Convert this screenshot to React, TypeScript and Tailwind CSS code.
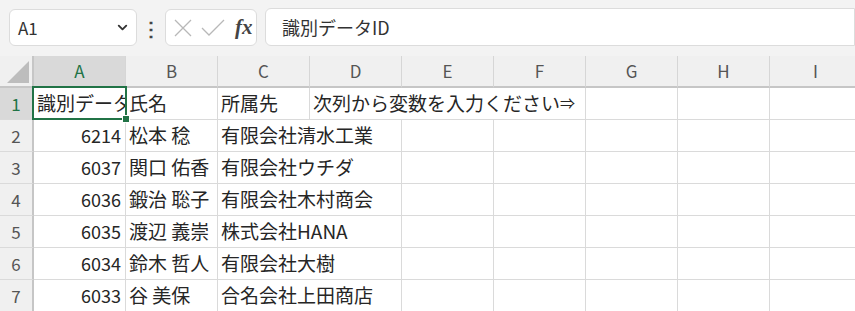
import { ChevronDown } from 'lucide-react';

const cols = ['A', 'B', 'C', 'D', 'E', 'F', 'G', 'H', 'I'];

const rows = [
  { id: '6214', name: '松本 稔', org: '有限会社清水工業' },
  { id: '6037', name: '関口 佑香', org: '有限会社ウチダ' },
  { id: '6036', name: '鍛治 聡子', org: '有限会社木村商会' },
  { id: '6035', name: '渡辺 義崇', org: '株式会社HANA' },
  { id: '6034', name: '鈴木 哲人', org: '有限会社大樹' },
  { id: '6033', name: '谷 美保', org: '合名会社上田商店' },
];

const font = "font-['Noto_Sans_CJK_JP','Noto_Sans',sans-serif]";
const cell = 'h-[32px] border-r border-b border-[#dadada] bg-white flex items-center overflow-hidden whitespace-nowrap';

function RowHead({ n, active }: { n: number; active?: boolean }) {
  return (
    <div
      className={`h-[32px] border-r-2 border-b border-r-[#c6c6c6] border-b-[#dadada] flex items-center justify-center text-[17px] ${
        active ? 'bg-[#d9d9d9] text-[#217346]' : 'bg-[#f0f0f0] text-[#555]'
      }`}
    >
      {n}
    </div>
  );
}

export default function App() {
  return (
    <div className={`w-[855px] h-[311px] overflow-hidden bg-[#f3f3f3] text-[#262626] ${font}`}>
      {/* Formula bar */}
      <div className="h-[56px] flex items-start pl-[9px] pt-[9px]">
        <div className="w-[128px] h-[37px] bg-white border border-[#dcdcdc] rounded-md flex items-center justify-between pl-2 pr-1.5">
          <span className="text-[17px] text-[#333]">A1</span>
          <ChevronDown size={15} strokeWidth={3} className="text-[#333]" />
        </div>
        <div className="w-[28px] h-[37px] flex items-center justify-center text-[#444] text-[20px] font-bold">⋮</div>
        <div className="w-[92px] h-[37px] bg-white border border-[#dcdcdc] rounded-md flex items-center pl-[6px]">
          <svg width="20" height="20" viewBox="0 0 20 20" className="ml-[1px]">
            <path d="M2 2 L18 18 M18 2 L2 18" stroke="#b8b8b8" strokeWidth="1.3" fill="none" />
          </svg>
          <svg width="24" height="20" viewBox="0 0 24 20" className="ml-[8px]">
            <path d="M1 10 L8 17 L23 2" stroke="#b8b8b8" strokeWidth="1.3" fill="none" />
          </svg>
          <span className="ml-[10px] text-[21px] italic font-bold text-[#444] font-['Liberation_Serif',serif]">fx</span>
        </div>
        <div className="ml-[8px] flex-1 h-[38px] -mt-px bg-white border border-[#dcdcdc] rounded-l-md flex items-center pl-[16px] text-[18px] text-[#333]">
          識別データID
        </div>
      </div>

      {/* Sheet */}
      <div className="relative grid grid-cols-[34px_repeat(9,92px)] auto-rows-[32px]">
        {/* Header row */}
        <div className="h-[32px] bg-[#f0f0f0] border-r-2 border-b-2 border-[#c6c6c6] relative">
          <svg className="absolute right-[3px] bottom-[3px]" width="22" height="22" viewBox="0 0 22 22">
            <polygon points="22,0 22,22 0,22" fill="#bdbdbd" />
          </svg>
        </div>
        {cols.map((c, i) => (
          <div
            key={c}
            className={`h-[32px] border-r border-r-[#d6d6d6] border-b-2 border-b-[#c6c6c6] flex items-center justify-center text-[17px] ${
              i === 0 ? 'bg-[#d9d9d9] text-[#217346]' : 'bg-[#f0f0f0] text-[#555]'
            }`}
          >
            {c}
          </div>
        ))}

        {/* Row 1 */}
        <RowHead n={1} active />
        <div className={`${cell} pl-[3px] text-[19px]`}>識別データID</div>
        <div className={`${cell} pl-[3px] text-[19px]`}>氏名</div>
        <div className={`${cell} pl-[3px] text-[19px]`}>所属先</div>
        <div className={`${cell} col-span-3 pl-[3px] text-[19px]`}>
          次列から変数を入力ください<span className="text-[15px]">⇒</span>
        </div>
        <div className={cell} />
        <div className={cell} />
        <div className={cell} />

        {rows.map((r, i) => (
          <div key={r.id} className="contents">
            <RowHead n={i + 2} />
            <div className={`${cell} justify-end pr-[4px] text-[18px]`}>{r.id}</div>
            <div className={`${cell} pl-[3px] text-[19px]`}>{r.name}</div>
            <div className={`${cell} col-span-2 pl-[3px] text-[19px]`}>{r.org}</div>
            <div className={cell} />
            <div className={cell} />
            <div className={cell} />
            <div className={cell} />
            <div className={cell} />
          </div>
        ))}

        {/* Selection on A1 */}
        <div className="absolute left-[32px] top-[30px] w-[95px] h-[34px] border-2 border-[#217346] pointer-events-none">
          <div className="absolute -right-[5px] -bottom-[5px] w-[8px] h-[8px] bg-[#217346] border border-white" />
        </div>
      </div>
    </div>
  );
}
